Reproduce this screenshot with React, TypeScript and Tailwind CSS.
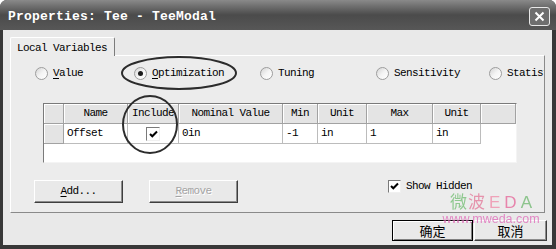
import type { ReactNode } from "react";

const monoBase = "font-['Liberation_Mono',monospace] text-[11px] tracking-[-0.6px]";
const mono = `${monoBase} text-black`;

// columns of the variables grid: width, header label
const COLUMNS: [number, string][] = [
    [20, ""],
    [64, "Name"],
    [51, "Include"],
    [104, "Nominal Value"],
    [35, "Min"],
    [49, "Unit"],
    [66, "Max"],
    [48, "Unit"],
];

const ROW = ["Offset", "", "0in", "-1", "in", "1", "in"];

const Radio = ({ checked, label, underline, width }: { checked?: boolean; label: string; underline?: boolean; width?: number }) => (
    <div className="flex items-center shrink-0" style={{ width }}>
        <span className="w-[13px] h-[13px] rounded-full border border-[#9c9c9c] bg-gradient-to-br from-[#d4d4d4] via-[#f4f4f4] to-white flex items-center justify-center shrink-0">
            {checked && <span className="w-[5px] h-[5px] rounded-full bg-[#1a1a1a]" />}
        </span>
        <span className={`${mono} ml-[5px] whitespace-nowrap`}>
            {underline ? (
                <>
                    <span className="underline underline-offset-2">{label[0]}</span>
                    {label.slice(1)}
                </>
            ) : (
                label
            )}
        </span>
    </div>
);

const Check = ({ size }: { size: number }) => (
    <span
        className="bg-white border border-t-[#7a7a7a] border-l-[#7a7a7a] border-r-[#f0f0f0] border-b-[#f0f0f0] flex items-center justify-center shrink-0"
        style={{ width: size, height: size }}
    >
        <svg width="9" height="8" viewBox="0 0 9 8">
            <path d="M1 4 L3.3 6.3 L8 1.5" fill="none" stroke="#000" strokeWidth="2" />
        </svg>
    </span>
);

const Button = ({ children, w, h, isDefault, className = "" }: { children: ReactNode; w: number; h: number; isDefault?: boolean; className?: string }) => (
    <div
        className={`flex items-center justify-center bg-[#e9e9e9] ${
            isDefault
                ? "border border-black shadow-[inset_1px_1px_0_#fff,inset_-1px_-1px_0_#808080]"
                : "border border-t-white border-l-white border-r-[#3e3e3e] border-b-[#3e3e3e] shadow-[inset_-1px_-1px_0_#8c8c8c]"
        } ${className}`}
        style={{ width: w, height: h }}
    >
        {children}
    </div>
);

export default function App() {
    return (
        <div className="relative w-[556px] h-[249px] bg-[#383838] rounded-t-[7px] overflow-hidden flex flex-col">
            {/* Title bar */}
            <div className="h-[30px] shrink-0 flex items-center justify-between pl-[8px] pr-[6px] pt-[3px] bg-gradient-to-b from-[#8a8a8a] via-[#4b4b4b] to-[#575757]">
                <span className="font-['Liberation_Mono',monospace] font-bold text-[13px] tracking-[0.2px] text-white">
                    Properties: Tee - TeeModal
                </span>
                <div className="w-[21px] h-[19px] rounded-[3px] border border-[#e8e8e8] bg-[#6e6e6e] flex items-center justify-center">
                    <svg width="11" height="11" viewBox="0 0 11 11">
                        <path d="M1.5 1.5 L9.5 9.5 M9.5 1.5 L1.5 9.5" stroke="#fff" strokeWidth="2" />
                    </svg>
                </div>
            </div>

            {/* Body */}
            <div className="flex-1 mx-[3px] mr-[4px] mb-[4px] bg-[#e9e9e9] flex flex-col">
                {/* Tab strip */}
                <div className="mt-[7px] ml-[7px] flex">
                    <div className={`${mono} relative z-10 w-[105px] h-[19px] -mb-[1px] pl-[6px] pt-[2px] bg-[#ececec] border-l border-t border-white border-r border-r-[#7c7c7c] rounded-t-[2px]`}>
                        Local Variables
                    </div>
                </div>

                {/* Tab panel */}
                <div className="ml-[7px] w-[535px] h-[158px] bg-[#ececec] border border-t-white border-l-white border-r-[#8a8a8a] border-b-[#8a8a8a] flex flex-col">
                    {/* Mode radios */}
                    <div className="mt-[11px] h-[13px] pl-[24px] pr-[1px] flex items-center overflow-hidden">
                        <Radio label="Value" underline width={99} />
                        <Radio label="Optimization" underline checked width={126} />
                        <Radio label="Tuning" width={116} />
                        <Radio label="Sensitivity" width={113} />
                        <Radio label="Statistics" />
                    </div>

                    {/* Variables grid */}
                    <div className="mt-[23px] ml-[32px] w-[474px] h-[60px] bg-white border border-t-[#7a7a7a] border-l-[#7a7a7a] border-r-[#f4f4f4] border-b-[#f4f4f4] flex flex-col">
                        <div className="flex h-[20px]">
                            {COLUMNS.map(([w, label], i) => (
                                <div
                                    key={i}
                                    className={`${mono} flex items-center justify-center bg-[#e4e4e4] border-r border-b border-[#a2a2a2] shadow-[inset_1px_1px_0_#fff]`}
                                    style={{ width: w }}
                                >
                                    {label}
                                </div>
                            ))}
                            <div className="flex-1 bg-[#e4e4e4] border-b border-r border-[#a2a2a2] shadow-[inset_1px_1px_0_#fff]" />
                        </div>
                        <div className="flex h-[20px]">
                            <div className="w-[20px] bg-[#e4e4e4] border-r border-b border-[#a2a2a2] shadow-[inset_1px_1px_0_#fff]" />
                            {ROW.map((v, i) => (
                                <div
                                    key={i}
                                    className={`${mono} flex items-center border-r border-b border-[#bcbcbc] ${i === 1 ? "justify-center" : "pl-[3px]"}`}
                                    style={{ width: COLUMNS[i + 1][0] }}
                                >
                                    {i === 1 ? <Check size={14} /> : v}
                                </div>
                            ))}
                        </div>
                    </div>

                    {/* Add / Remove / Show Hidden */}
                    <div className="mt-[15px] flex items-start">
                        <Button w={89} h={23} className="ml-[23px] mt-[2px]">
                            <span className={mono}>
                                <span className="underline underline-offset-2">A</span>dd...
                            </span>
                        </Button>
                        <Button w={89} h={23} className="ml-[26px] mt-[2px]">
                            <span className={`${monoBase} text-[#a4a4a4] [text-shadow:1px_1px_0_#fff]`}>
                                <span className="underline underline-offset-2">R</span>emove
                            </span>
                        </Button>
                        <div className="ml-[150px] flex items-center">
                            <Check size={13} />
                            <span className={`${mono} ml-[5px]`}>Show Hidden</span>
                        </div>
                    </div>
                </div>

                {/* OK / Cancel */}
                <div className="mt-[7px] mr-[5px] flex justify-end gap-[1px]">
                    <Button w={81} h={21} isDefault>
                        <span className="font-['Noto_Sans_CJK_SC',sans-serif] text-[13px] leading-none text-black">确定</span>
                    </Button>
                    <Button w={73} h={21}>
                        <span className="font-['Noto_Sans_CJK_SC',sans-serif] text-[13px] leading-none text-black">取消</span>
                    </Button>
                </div>
            </div>

            {/* Hand-drawn annotation rings */}
            <svg className="absolute left-0 top-0 pointer-events-none" width="556" height="249">
                <ellipse cx="179" cy="73" rx="57" ry="16" fill="none" stroke="#2c2c2c" strokeWidth="2" />
                <ellipse cx="150" cy="124.5" rx="27" ry="28.5" fill="none" stroke="#2c2c2c" strokeWidth="2" />
            </svg>

            {/* Watermark */}
            <div className="absolute left-[448px] top-[191px] w-[86px] pointer-events-none flex flex-col items-center opacity-90">
                <div className="flex items-baseline font-['Noto_Sans_CJK_SC',sans-serif] text-[17px] leading-[20px]">
                    <span className="text-[#86c586]">微</span>
                    <span className="text-[#e58aa6] ml-[1px]">波</span>
                    <span className="font-['Liberation_Sans',sans-serif] font-light text-[#f09cb4] ml-[4px]">E</span>
                    <span className="font-['Liberation_Sans',sans-serif] font-light text-[#e77aa6] ml-[4px]">D</span>
                    <span className="font-['Liberation_Sans',sans-serif] font-light text-[#82c082] ml-[4px]">A</span>
                </div>
                <div className="font-['Liberation_Sans',sans-serif] text-[12.5px] leading-[12px] text-[#e27cc0]">www.mweda.com</div>
            </div>
        </div>
    );
}
